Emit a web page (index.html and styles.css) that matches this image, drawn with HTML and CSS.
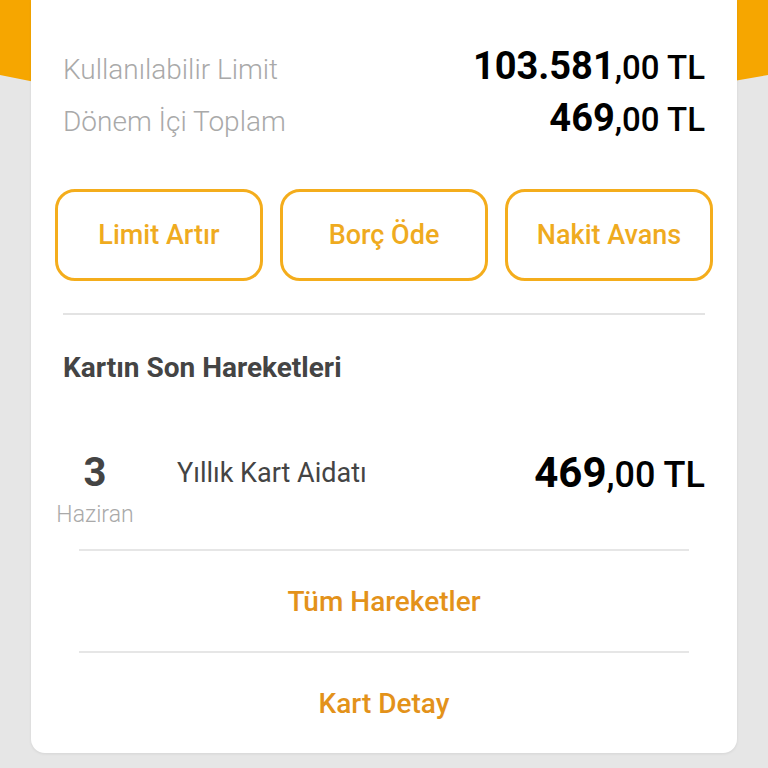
FILE: index.html
```html
<!DOCTYPE html>
<html lang="tr">

<head>
    <meta charset="UTF-8">
    <meta name="viewport" content="width=device-width, initial-scale=1.0">
    <title>Kart Özeti</title>
    <link rel="stylesheet" href="styles.css">
</head>

<body>
    <div class="screen">
        <div class="band"></div>

        <div class="card">
            <div class="summary">
                <div class="summary-row">
                    <span class="label">Kullanılabilir Limit</span>
                    <span class="amount"><b>103.581</b>,00 TL</span>
                </div>
                <div class="summary-row">
                    <span class="label">Dönem İçi Toplam</span>
                    <span class="amount"><b>469</b>,00 TL</span>
                </div>
            </div>

            <div class="actions">
                <a class="btn">Limit Artır</a>
                <a class="btn">Borç Öde</a>
                <a class="btn">Nakit Avans</a>
            </div>

            <div class="divider"></div>

            <h2 class="title">Kartın Son Hareketleri</h2>

            <div class="tx">
                <div class="tx-date">
                    <span class="day">3</span>
                    <span class="month">Haziran</span>
                </div>
                <span class="tx-name">Yıllık Kart Aidatı</span>
                <span class="amount tx-amount"><b>469</b>,00 TL</span>
            </div>

            <div class="links">
                <a class="link">Tüm Hareketler</a>
                <a class="link">Kart Detay</a>
            </div>
        </div>
    </div>
</body>

</html>
```

FILE: styles.css
```css
* {
    box-sizing: border-box;
}

body {
    margin: 0;
    font-family: Roboto, "Noto Sans", sans-serif;
    background: #e6e6e6;
}

.screen {
    position: relative;
    height: 768px;
    padding: 0 31px 15px;
    display: flex;
    flex-direction: column;
}

/* orange header behind the card */
.band {
    position: absolute;
    top: 0;
    left: 0;
    right: 0;
    height: 90px;
    background: #f6a600;
    clip-path: polygon(0 0, 100% 0, 100% 75px, calc(100% - 40px) 82px, 50% 88px, 40px 83px, 0 75px);
}

.card {
    position: relative;
    flex: 1;
    background: #fff;
    border-radius: 0 0 14px 14px;
    box-shadow: 0 1px 3px rgba(0, 0, 0, 0.08);
    display: flex;
    flex-direction: column;
}

.summary {
    padding: 40px 32px 0;
}

.summary-row {
    display: flex;
    justify-content: space-between;
    align-items: baseline;
    height: 52px;
    line-height: 52px;
}

.label {
    font-size: 28px;
    font-weight: 300;
    color: #a9a9a9;
}

.amount {
    font-size: 33px;
    font-weight: 500;
    color: #000;
}

.amount b {
    font-size: 38px;
    font-weight: 700;
}

.actions {
    display: flex;
    gap: 17px;
    padding: 0 24px;
    margin-top: 45px;
}

.btn {
    flex: 1;
    height: 92px;
    border: 3px solid #f4ad1c;
    border-radius: 20px;
    display: flex;
    align-items: center;
    justify-content: center;
    font-size: 27px;
    font-weight: 500;
    color: #efab1f;
}

.divider {
    margin: 32px 32px 0;
    height: 2px;
    background: #e3e3e3;
}

.title {
    margin: 36px 32px 0;
    font-size: 28px;
    line-height: 33px;
    font-weight: 700;
    color: #444;
}

.tx {
    display: flex;
    align-items: flex-start;
    padding: 0 32px 0 24px;
    margin-top: 67px;
    height: 98px;
}

.tx-date {
    width: 80px;
    display: flex;
    flex-direction: column;
    align-items: center;
}

.day {
    font-size: 40px;
    font-weight: 700;
    color: #444;
    line-height: 44px;
}

.month {
    font-size: 23px;
    font-weight: 300;
    color: #a9a9a9;
    line-height: 40px;
}

.tx-name {
    margin-left: 42px;
    flex: 1;
    font-size: 27px;
    color: #444;
    line-height: 44px;
}

.tx-amount {
    font-size: 36px;
    line-height: 44px;
}

.tx-amount b {
    font-size: 42px;
}

.links {
    flex: 1;
    margin: 0 48px;
    display: flex;
    flex-direction: column;
}

.link {
    flex: 1;
    border-top: 2px solid #e6e6e6;
    display: flex;
    align-items: center;
    justify-content: center;
    font-size: 28px;
    font-weight: 500;
    color: #e3921a;
}
```
